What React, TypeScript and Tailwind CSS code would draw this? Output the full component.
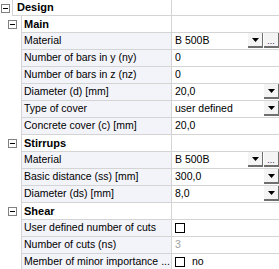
import React from 'react';

type Kind = 'text' | 'combo' | 'comboDots' | 'check' | 'checkNo' | 'disabled';

interface Row {
  group?: boolean;
  label: string;
  value?: string;
  kind?: Kind;
}

const rows: Row[] = [
  { group: true, label: 'Main' },
  { label: 'Material', value: 'B 500B', kind: 'comboDots' },
  { label: 'Number of bars in y (ny)', value: '0' },
  { label: 'Number of bars in z (nz)', value: '0' },
  { label: 'Diameter (d) [mm]', value: '20,0', kind: 'combo' },
  { label: 'Type of cover', value: 'user defined', kind: 'combo' },
  { label: 'Concrete cover (c) [mm]', value: '20,0' },
  { group: true, label: 'Stirrups' },
  { label: 'Material', value: 'B 500B', kind: 'comboDots' },
  { label: 'Basic distance (ss) [mm]', value: '300,0', kind: 'combo' },
  { label: 'Diameter (ds) [mm]', value: '8,0', kind: 'combo' },
  { group: true, label: 'Shear' },
  { label: 'User defined number of cuts', kind: 'check' },
  { label: 'Number of cuts (ns)', value: '3', kind: 'disabled' },
  { label: 'Member of minor importance ...', kind: 'checkNo' },
];

const Minus = () => (
  <div className="w-[9px] h-[9px] border border-[#808080] bg-white flex items-center justify-center">
    <div className="w-[5px] h-px bg-black" />
  </div>
);

const Arrow = () => (
  <div className="w-[15px] h-[15px] bg-[#f4f4f4] border-r border-b-2 border-[#6f6f6f] flex items-center justify-center">
    <svg width="7" height="4" viewBox="0 0 7 4">
      <polygon points="0,0 7,0 3.5,4" fill="#000" />
    </svg>
  </div>
);

const Dots = () => (
  <div className="w-[15px] h-[15px] bg-[#f4f4f4] border-r border-b-2 border-[#6f6f6f] flex items-end justify-center text-[9px] leading-[10px] text-[#402060]">
    ...
  </div>
);

const Check = () => <div className="w-[10px] h-[10px] border border-black bg-white" />;

function Value({ row }: { row: Row }) {
  const k = row.kind ?? 'text';
  return (
    <div className="flex-1 h-full flex items-center pl-[3px] border-b border-[#d4d4d4] min-w-0">
      {k === 'check' && <Check />}
      {k === 'checkNo' && (
        <div className="flex items-center gap-[7px]">
          <Check />
          <span>no</span>
        </div>
      )}
      {k === 'disabled' && <span className="text-[#a0a0a0]">{row.value}</span>}
      {(k === 'text' || k === 'combo' || k === 'comboDots') && (
        <span className="flex-1 truncate">{row.value}</span>
      )}
      {k === 'combo' && (
        <div className="self-start">
          <Arrow />
        </div>
      )}
      {k === 'comboDots' && (
        <div className="self-start flex gap-px">
          <Arrow />
          <Dots />
        </div>
      )}
    </div>
  );
}

export default function App() {
  return (
    <div
      className="w-[279px] h-[269px] overflow-hidden bg-white text-black text-[10.5px]"
      style={{ fontFamily: '"Liberation Sans", Arial, sans-serif' }}
    >
      <div className="flex h-[16px]">
        <div className="w-[12px] flex items-center justify-center pr-px">
          <Minus />
        </div>
        <div className="w-[159px] h-full border-l border-b border-[#d4d4d4] pl-[4px] flex items-center font-bold text-[11px]">
          Design
        </div>
        <div className="flex-1 h-full border-l border-b border-[#d4d4d4]" />
      </div>
      {rows.map((row, i) =>
        row.group ? (
          <div key={i} className="flex h-[17px]">
            <div className="w-[21px] flex items-center justify-end pr-[4px]">
              <Minus />
            </div>
            <div className="w-[150px] h-full border-l border-b border-[#d4d4d4] pl-[2px] flex items-center font-bold text-[11px]">
              {row.label}
            </div>
            <div className="flex-1 h-full border-l border-b border-[#d4d4d4]" />
          </div>
        ) : (
          <div key={i} className="flex h-[17px]">
            <div className="w-[21px]" />
            <div className="w-[150px] h-full border-l border-b border-[#d4d4d4] bg-[#f3f3fa] pl-[2px] flex items-center whitespace-nowrap overflow-hidden">
              {row.label}
            </div>
            <div className="w-px h-full bg-[#d4d4d4]" />
            <Value row={row} />
          </div>
        )
      )}
    </div>
  );
}
